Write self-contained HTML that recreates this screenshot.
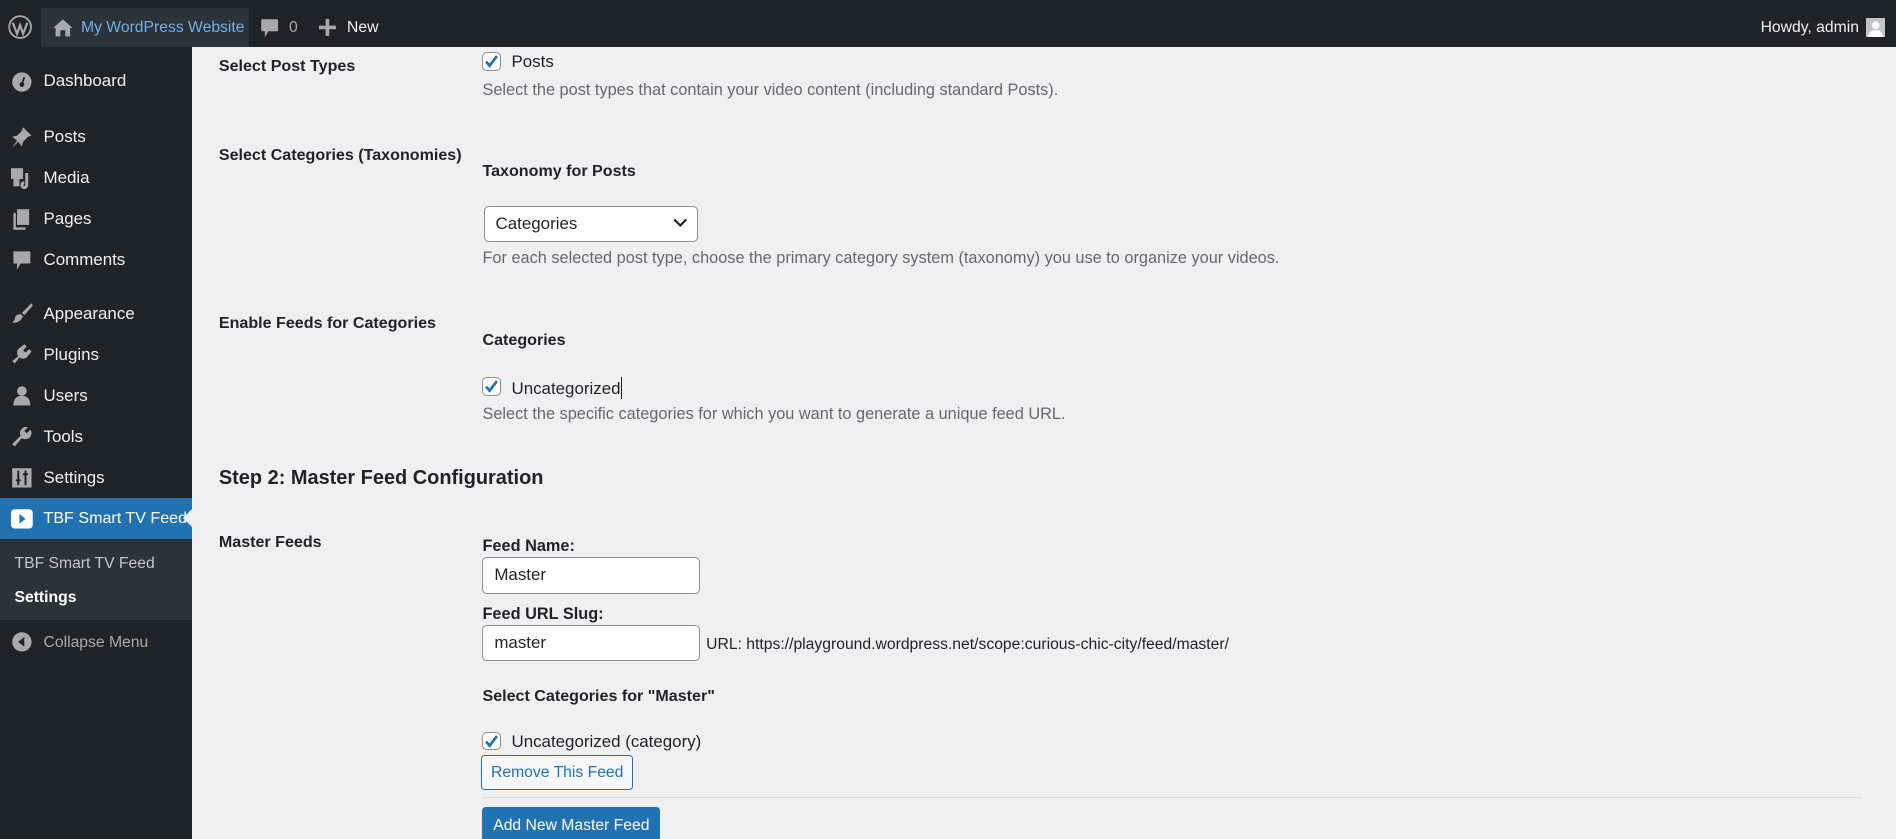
<!DOCTYPE html>
<html><head><meta charset="utf-8">
<style>
html,body{margin:0;padding:0;overflow:hidden;background:#f0f0f1;}
#z{zoom:1.2092;width:1568px;height:694px;position:relative;font-family:"Liberation Sans",sans-serif;font-size:13px;color:#1d2327;}
#bar{position:absolute;left:0;top:0;width:1568px;height:39px;background:#1d2327;color:#f0f0f1;font-size:13px;}
#bar .it{position:absolute;top:0;height:39px;line-height:46px;}
#bar .ico{line-height:0;}
#bar svg{display:block;}
#side{position:absolute;left:0;top:39px;width:159px;height:655px;background:#1d2327;}
.mi{position:absolute;left:0;width:159px;height:34px;line-height:34px;color:#f0f0f1;font-size:14px;white-space:nowrap;}
.mi span{position:absolute;left:36px;}
.ic{position:absolute;left:9px;top:8px;width:18px;height:18px;}
.a{position:absolute;white-space:nowrap;}
.lbl{font-weight:bold;font-size:13.3px;}
.desc{color:#646970;font-size:13.5px;}
.cb{position:absolute;width:14px;height:14px;border:1px solid #8c8f94;border-radius:4px;background:#fff;}
.cb svg{position:absolute;left:0;top:0;}
.inp{position:absolute;height:28px;border:1px solid #8c8f94;border-radius:4px;background:#fff;box-sizing:border-box;line-height:26px;padding-left:9px;font-size:14px;}
</style></head><body><div id="z">
<div id="bar">
 <div class="it ico" style="left:7px;top:12px;height:20px"><svg width="20" height="20" viewBox="0 0 20 20"><circle cx="10" cy="10" r="9" fill="none" stroke="#a7aaad" stroke-width="1.5"/><path d="M4 6.5 L7.5 15.5 L10 8.5 L12.5 15.5 L16 6.5" fill="none" stroke="#a7aaad" stroke-width="1.8"/></svg></div>
 <div class="it" style="left:34px;width:172px;top:7px;height:32px;background:#2c3338"></div>
 <div class="it ico" style="left:43px;top:14px;height:18px"><svg width="18" height="18" viewBox="0 0 18 18"><path d="M9 2 L1 9 H3 V16 H7 V11 H11 V16 H15 V9 H17 Z" fill="#a7aaad"/></svg></div>
 <div class="it" style="left:67px;color:#72aee6">My WordPress Website</div>
 <div class="it ico" style="left:215px;top:15px;height:18px"><svg width="16" height="18" viewBox="0 0 16 18"><path d="M2 1 H14 Q15 1 15 2 V10 Q15 11 14 11 H7 L4 16 V11 H2 Q1 11 1 10 V2 Q1 1 2 1Z" fill="#a7aaad"/></svg></div>
 <div class="it" style="left:239px;color:#a7aaad">0</div>
 <div class="it ico" style="left:264px;top:16px;height:14px"><svg width="14" height="14"><path d="M5.5 0H8.5V5.5H14V8.5H8.5V14H5.5V8.5H0V5.5H5.5Z" fill="#a7aaad"/></svg></div>
 <div class="it" style="left:287px">New</div>
 <div class="it" style="left:1456px">Howdy, admin</div>
 <div class="it ico" style="left:1543px;top:15px;width:16px;height:16px;background:#c3c4c7"><svg width="16" height="16"><circle cx="8" cy="6" r="3.2" fill="#fff"/><path d="M2 16 Q2 10 8 10 Q14 10 14 16Z" fill="#fff"/></svg></div>
</div>
<div id="side">
 <div class="mi" style="top:11px"><svg class="ic" viewBox="0 0 18 18"><circle cx="9" cy="10" r="8" fill="#a7aaad"/><circle cx="9" cy="12" r="2" fill="#1d2327"/><path d="M9 12 L11 6" stroke="#1d2327" stroke-width="1.5"/></svg><span>Dashboard</span></div>
 <div class="mi" style="top:57px"><svg class="ic" viewBox="0 0 18 18"><path d="M10 1 L17 8 L14 9 L10 13 L9 17 L6 13 L1 18 L5 12 L1 9 L5 8 L9 4Z" fill="#a7aaad"/></svg><span>Posts</span></div>
 <div class="mi" style="top:91px"><svg class="ic" viewBox="0 0 18 18"><rect x="0" y="1" width="10" height="9" fill="#a7aaad"/><path d="M13 5 V15 A2 2 0 1 1 11 13" stroke="#a7aaad" stroke-width="2.5" fill="none"/><rect x="2" y="10" width="5" height="6" fill="#a7aaad"/></svg><span>Media</span></div>
 <div class="mi" style="top:125px"><svg class="ic" viewBox="0 0 18 18"><rect x="5" y="1" width="10" height="13" fill="#a7aaad"/><path d="M3 4 V17 H12" stroke="#a7aaad" stroke-width="2" fill="none"/></svg><span>Pages</span></div>
 <div class="mi" style="top:159px"><svg class="ic" viewBox="0 0 18 18"><path d="M2 2 H16 V12 H8 L5 17 V12 H2Z" fill="#a7aaad"/></svg><span>Comments</span></div>
 <div class="mi" style="top:203px"><svg class="ic" viewBox="0 0 18 18"><path d="M17 1 L9 9 L11 11 L18 3Z M8 10 Q3 10 3 15 L1 17 Q7 18 10 12Z" fill="#a7aaad"/></svg><span>Appearance</span></div>
 <div class="mi" style="top:237px"><svg class="ic" viewBox="0 0 18 18"><path d="M11 1 L13 3 L10 6 L12 8 L15 5 L17 7 L13 12 Q10 14 7 12 L3 17 L1 15 L6 11 Q4 8 6 5Z" fill="#a7aaad"/></svg><span>Plugins</span></div>
 <div class="mi" style="top:271px"><svg class="ic" viewBox="0 0 18 18"><circle cx="9" cy="5" r="4" fill="#a7aaad"/><path d="M2 17 Q2 9 9 9 Q16 9 16 17Z" fill="#a7aaad"/></svg><span>Users</span></div>
 <div class="mi" style="top:305px"><svg class="ic" viewBox="0 0 18 18"><path d="M16 3 A5 5 0 0 1 9 10 L3 17 L1 15 L8 8 A5 5 0 0 1 14 1 L11 4 L13 6Z" fill="#a7aaad"/></svg><span>Tools</span></div>
 <div class="mi" style="top:339px"><svg class="ic" viewBox="0 0 18 18"><rect x="1" y="1" width="16" height="16" fill="#a7aaad"/><path d="M6 3V15M12 3V15M4 11H8M10 6H14" stroke="#1d2327" stroke-width="1.6"/></svg><span>Settings</span></div>
 <div class="mi" style="top:373px;background:#2271b1;color:#fff"><svg class="ic" viewBox="0 0 18 18"><rect x="0" y="1" width="18" height="16" rx="3" fill="#fff"/><path d="M7 5 L12 9 L7 13Z" fill="#2271b1"/></svg><span style="font-size:13.3px">TBF Smart TV Feed</span><div style="position:absolute;right:0;top:9px;width:0;height:0;border:8px solid transparent;border-right-color:#f0f0f1"></div></div>
 <div style="position:absolute;top:407px;left:0;width:159px;height:67px;background:#2c3338"></div>
 <div class="a" style="top:420px;left:12px;color:#c3c4c7;font-size:13px">TBF Smart TV Feed</div>
 <div class="a" style="top:448px;left:12px;color:#fff;font-weight:bold;font-size:13px">Settings</div>
 <div class="mi" style="top:475px;color:#a7aaad;font-size:13px"><svg class="ic" viewBox="0 0 18 18"><circle cx="9" cy="9" r="8" fill="#a7aaad"/><path d="M11 5 L6 9 L11 13Z" fill="#1d2327"/></svg><span>Collapse Menu</span></div>
</div>

<div class="a lbl" style="left:181px;top:47px">Select Post Types</div>
<div class="cb" style="left:399px;top:43px"><svg width="14" height="14"><path d="M2.5 7 L5.5 10.5 L11.5 2.5" stroke="#2271b1" stroke-width="2.2" fill="none"/></svg></div>
<div class="a" style="left:423px;top:43px;font-size:14px">Posts</div>
<div class="a desc" style="left:399px;top:67px">Select the post types that contain your video content (including standard Posts).</div>

<div class="a lbl" style="left:181px;top:121px">Select Categories (Taxonomies)</div>
<div class="a lbl" style="left:399px;top:134px">Taxonomy for Posts</div>
<div class="inp" style="left:400px;top:170px;width:177px;height:30px;line-height:28px">Categories<svg style="position:absolute;right:8px;top:9px" width="12" height="10"><path d="M1 2 L6 7 L11 2" stroke="#1d2327" stroke-width="1.8" fill="none"/></svg></div>
<div class="a desc" style="left:399px;top:206px">For each selected post type, choose the primary category system (taxonomy) you use to organize your videos.</div>

<div class="a lbl" style="left:181px;top:260px">Enable Feeds for Categories</div>
<div class="a lbl" style="left:399px;top:274px">Categories</div>
<div class="cb" style="left:399px;top:312px"><svg width="14" height="14"><path d="M2.5 7 L5.5 10.5 L11.5 2.5" stroke="#2271b1" stroke-width="2.2" fill="none"/></svg></div>
<div class="a" style="left:423px;top:312px;font-size:14px">Uncategorized<span style="display:inline-block;width:1px;height:18px;background:#1d2327;vertical-align:-4px"></span></div>
<div class="a desc" style="left:399px;top:335px">Select the specific categories for which you want to generate a unique feed URL.</div>

<div class="a" style="left:181px;top:386px;font-size:16.5px;font-weight:bold">Step 2: Master Feed Configuration</div>

<div class="a lbl" style="left:181px;top:441px">Master Feeds</div>
<div class="a" style="left:399px;top:444px;font-size:13.5px;font-weight:bold">Feed Name:</div>
<div class="inp" style="left:399px;top:461px;width:180px;height:30px;line-height:28px">Master</div>
<div class="a" style="left:399px;top:500px;font-size:13.5px;font-weight:bold">Feed URL Slug:</div>
<div class="inp" style="left:399px;top:517px;width:180px;height:30px;line-height:28px">master</div>
<div class="a" style="left:584px;top:526px;font-size:13px">URL: https://playground.wordpress.net/scope:curious-chic-city/feed/master/</div>
<div class="a lbl" style="left:399px;top:568px">Select Categories for "Master"</div>
<div class="cb" style="left:399px;top:605px"><svg width="14" height="14"><path d="M2.5 7 L5.5 10.5 L11.5 2.5" stroke="#2271b1" stroke-width="2.2" fill="none"/></svg></div>
<div class="a" style="left:423px;top:605px;font-size:14px">Uncategorized (category)</div>
<div class="a" style="left:398px;top:624px;width:124px;height:28px;border:1px solid #2271b1;border-radius:3px;background:#f6f7f7;color:#2271b1;text-align:center;line-height:28px;font-size:13px">Remove This Feed</div>
<div class="a" style="left:399px;top:659px;width:1141px;height:1px;background:#dcdcde"></div>
<div class="a" style="left:399px;top:667px;width:147px;height:32px;border-radius:3px;background:#2271b1;color:#fff;text-align:center;line-height:32px;font-size:13px">Add New Master Feed</div>
</div></body></html>
